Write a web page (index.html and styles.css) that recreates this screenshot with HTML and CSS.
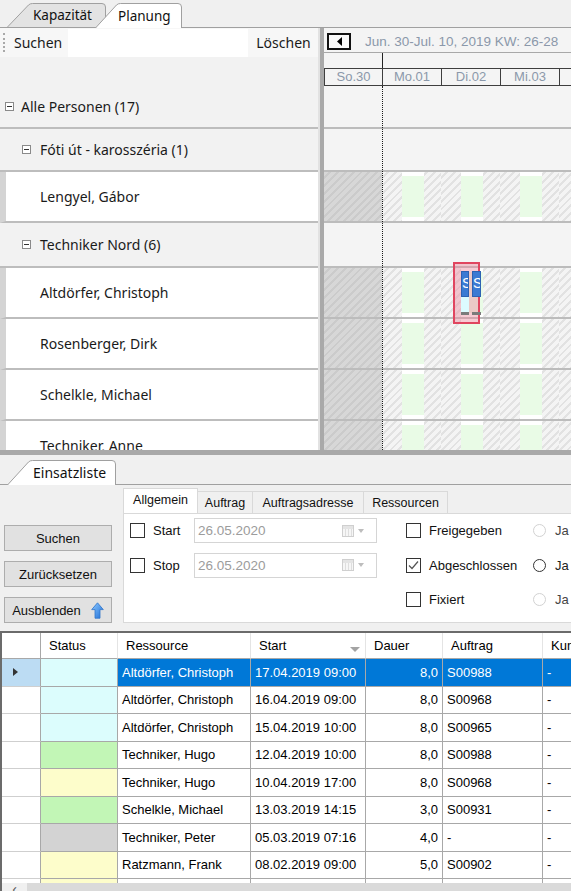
FILE: index.html
```html
<!DOCTYPE html>
<html lang="de">
<head>
<meta charset="utf-8">
<title>Planung</title>
<link rel="stylesheet" href="styles.css">
</head>
<body>
<div class="app">
  <div class="doc-tabs">
    <div class="doc-tab tab-kap">
      <svg class="tab-shape" width="99" height="24" viewBox="0 0 99 24"><path d="M0.5 24 L21.5 2 Q23 0.5 25.5 0.5 L95 0.5 Q98.5 0.5 98.5 4 L98.5 24" fill="#e3e3e3" stroke="#a0a0a0"/></svg>
      <span class="tab-label">Kapazität</span>
    </div>
    <div class="doc-tab tab-plan">
      <svg class="tab-shape" width="87" height="25" viewBox="0 0 87 25"><path d="M0.5 25 L21.5 2 Q23 0.5 25.5 0.5 L83 0.5 Q86.5 0.5 86.5 4 L86.5 25" fill="#ffffff" stroke="#a0a0a0"/></svg>
      <span class="tab-label">Planung</span>
    </div>
  </div>

  <div class="planner">
    <div class="tree-pane">
      <div class="search-bar">
        <span class="grip"></span>
        <span class="search-label">Suchen</span>
        <span class="search-input"></span>
        <span class="search-clear">Löschen</span>
      </div>
      <div class="tree-head"></div>
      <div class="tree-row group lvl0 h43"><span class="minus"></span>Alle Personen (17)</div>
      <div class="tree-row group lvl1 h43"><span class="minus"></span>Fóti út - karosszéria (1)</div>
      <div class="tree-row person">Lengyel, Gábor</div>
      <div class="tree-row group lvl1 h45"><span class="minus"></span>Techniker Nord (6)</div>
      <div class="tree-row person">Altdörfer, Christoph</div>
      <div class="tree-row person">Rosenberger, Dirk</div>
      <div class="tree-row person">Schelkle, Michael</div>
      <div class="tree-row person">Techniker, Anne</div>
    </div>
    <div class="v-split"></div>
    <div class="gantt-pane">
      <div class="gantt-title">
        <span class="nav-back"><svg width="5" height="9" viewBox="0 0 5 9"><path d="M5 0 L0 4.5 L5 9 Z" fill="#000"/></svg></span>
        <span class="range">Jun. 30-Jul. 10, 2019 KW: 26-28</span>
      </div>
      <div class="gantt-blank"><span class="blank-past"></span></div>
      <div class="day-row">
        <span class="day-cell first">So.30</span>
        <span class="day-cell">Mo.01</span>
        <span class="day-cell">Di.02</span>
        <span class="day-cell">Mi.03</span>
        <span class="day-cell">Do.04</span>
      </div>
      <div class="g-row group h43"></div>
      <div class="g-row group h43"></div>
      <div class="g-row person">
        <span class="g-off"></span>
        <span class="g-day"><span class="work"><span class="work-in"></span></span></span>
        <span class="g-day"><span class="work"><span class="work-in"></span></span></span>
        <span class="g-day"><span class="work"><span class="work-in"></span></span></span>
        <span class="g-day"><span class="work"><span class="work-in"></span></span></span>
      </div>
      <div class="g-row group h45"></div>
      <div class="g-row person">
        <span class="g-off"></span>
        <span class="g-day"><span class="work"><span class="work-in"></span></span></span>
        <span class="g-day"><span class="work"><span class="work-in"></span></span></span>
        <span class="g-day"><span class="work"><span class="work-in"></span></span></span>
        <span class="g-day"><span class="work"><span class="work-in"></span></span></span>
      </div>
      <div class="g-row person">
        <span class="g-off"></span>
        <span class="g-day"><span class="work"><span class="work-in"></span></span></span>
        <span class="g-day"><span class="work"><span class="work-in"></span></span></span>
        <span class="g-day"><span class="work"><span class="work-in"></span></span></span>
        <span class="g-day"><span class="work"><span class="work-in"></span></span></span>
      </div>
      <div class="g-row person">
        <span class="g-off"></span>
        <span class="g-day"><span class="work"><span class="work-in"></span></span></span>
        <span class="g-day"><span class="work"><span class="work-in"></span></span></span>
        <span class="g-day"><span class="work"><span class="work-in"></span></span></span>
        <span class="g-day"><span class="work"><span class="work-in"></span></span></span>
      </div>
      <div class="g-row person">
        <span class="g-off"></span>
        <span class="g-day"><span class="work"><span class="work-in"></span></span></span>
        <span class="g-day"><span class="work"><span class="work-in"></span></span></span>
        <span class="g-day"><span class="work"><span class="work-in"></span></span></span>
        <span class="g-day"><span class="work"><span class="work-in"></span></span></span>
      </div>
      <div class="today-line"></div>
      <div class="appt">
        <div class="appt-col">
          <span class="appt-bar">S</span>
          <span class="appt-state"></span>
          <span class="appt-foot"></span>
        </div>
        <div class="appt-col wide">
          <span class="appt-bar">S</span>
          <span class="appt-gap"></span>
          <span class="appt-foot"></span>
        </div>
      </div>
    </div>
  </div>

  <div class="h-split"></div>

  <div class="list-tabs">
    <div class="doc-tab tab-einsatz">
      <svg class="tab-shape" width="109" height="25" viewBox="0 0 109 25"><path d="M0.5 25 L21.5 2 Q23 0.5 25.5 0.5 L105 0.5 Q108.5 0.5 108.5 4 L108.5 25" fill="#ffffff" stroke="#a0a0a0"/></svg>
      <span class="tab-label">Einsatzliste</span>
    </div>
  </div>

  <div class="filter-panel">
    <div class="btn-col">
      <span class="btn">Suchen</span>
      <span class="btn">Zurücksetzen</span>
      <span class="btn">Ausblenden
        <svg class="up-icon" width="13" height="17" viewBox="0 0 13 17">
          <defs><linearGradient id="ug" x1="0" y1="0" x2="1" y2="1"><stop offset="0" stop-color="#8cc8ff"/><stop offset="1" stop-color="#1f6fd6"/></linearGradient></defs>
          <path d="M6.5 0.8 L12.3 7.6 L9 7.6 L9 16.2 L4 16.2 L4 7.6 L0.7 7.6 Z" fill="url(#ug)" stroke="#2f74c9" stroke-width="0.8"/>
        </svg>
      </span>
    </div>
    <div class="filter-tabs">
      <div class="ftab-strip">
        <span class="ftab active w-allg">Allgemein</span>
        <span class="ftab w-auf">Auftrag</span>
        <span class="ftab w-adr">Auftragsadresse</span>
        <span class="ftab w-res">Ressourcen</span>
      </div>
      <div class="ftab-body">
        <span class="cb"></span><span class="flabel">Start</span>
        <span class="date-in"><span class="date-text">26.05.2020</span><span class="cal"></span><span class="dd"></span></span>
        <span class="sp"></span>
        <span class="cb"></span><span class="flabel">Freigegeben</span><span class="radio dim"></span><span class="ja dim-t">Ja</span>

        <span class="cb"></span><span class="flabel">Stop</span>
        <span class="date-in"><span class="date-text">26.05.2020</span><span class="cal"></span><span class="dd"></span></span>
        <span class="sp"></span>
        <span class="cb checked"><svg width="13" height="13" viewBox="0 0 13 13"><path d="M2 6.5 L5 9.5 L11 2.5" fill="none" stroke="#555" stroke-width="1.2"/></svg></span><span class="flabel">Abgeschlossen</span><span class="radio"></span><span class="ja">Ja</span>

        <span></span><span></span><span></span>
        <span class="sp"></span>
        <span class="cb"></span><span class="flabel">Fixiert</span><span class="radio dim"></span><span class="ja dim-t">Ja</span>
      </div>
    </div>
  </div>

  <div class="grid-wrap">
    <div class="grid-view">
      <table class="list">
        <thead>
          <tr>
            <th class="c-rh"></th>
            <th class="c-st">Status</th>
            <th class="c-res">Ressource</th>
            <th class="c-start">Start<span class="sort"></span></th>
            <th class="c-dur">Dauer</th>
            <th class="c-auf">Auftrag</th>
            <th class="c-ku">Kunde</th>
          </tr>
        </thead>
        <tbody>
          <tr class="sel">
            <td class="rh"><span class="cur"></span></td>
            <td class="st s-cyan"></td>
            <td>Altdörfer, Christoph</td><td>17.04.2019 09:00</td><td class="num">8,0</td><td>S00988</td><td>-</td>
          </tr>
          <tr>
            <td class="rh"></td><td class="st s-cyan"></td>
            <td>Altdörfer, Christoph</td><td>16.04.2019 09:00</td><td class="num">8,0</td><td>S00968</td><td>-</td>
          </tr>
          <tr>
            <td class="rh"></td><td class="st s-cyan"></td>
            <td>Altdörfer, Christoph</td><td>15.04.2019 10:00</td><td class="num">8,0</td><td>S00965</td><td>-</td>
          </tr>
          <tr>
            <td class="rh"></td><td class="st s-green"></td>
            <td>Techniker, Hugo</td><td>12.04.2019 10:00</td><td class="num">8,0</td><td>S00988</td><td>-</td>
          </tr>
          <tr>
            <td class="rh"></td><td class="st s-yellow"></td>
            <td>Techniker, Hugo</td><td>10.04.2019 17:00</td><td class="num">8,0</td><td>S00968</td><td>-</td>
          </tr>
          <tr>
            <td class="rh"></td><td class="st s-green"></td>
            <td>Schelkle, Michael</td><td>13.03.2019 14:15</td><td class="num">3,0</td><td>S00931</td><td>-</td>
          </tr>
          <tr>
            <td class="rh"></td><td class="st s-gray"></td>
            <td>Techniker, Peter</td><td>05.03.2019 07:16</td><td class="num">4,0</td><td>-</td><td>-</td>
          </tr>
          <tr>
            <td class="rh"></td><td class="st s-yellow"></td>
            <td>Ratzmann, Frank</td><td>08.02.2019 09:00</td><td class="num">5,0</td><td>S00902</td><td>-</td>
          </tr>
          <tr>
            <td class="rh"></td><td class="st s-yellow"></td>
            <td>Techniker, Hugo</td><td>06.02.2019 09:00</td><td class="num">8,0</td><td>S00899</td><td>-</td>
          </tr>
        </tbody>
      </table>
    </div>
    <div class="hscroll">
      <span class="hs-arrow">&#8249;</span>
      <span class="hs-thumb"></span>
    </div>
  </div>
</div>
</body>
</html>
```
FILE: styles.css
```css
* { box-sizing: border-box; }
html, body { margin: 0; padding: 0; }
body {
  width: 571px;
  height: 891px;
  overflow: hidden;
  background: #f0f0f0;
  font-family: "Liberation Sans", Arial, sans-serif;
  font-size: 13px;
  color: #000;
}
.app {
  width: 571px;
  height: 891px;
  display: flex;
  flex-direction: column;
  overflow: hidden;
}

/* ---------- document tabs ---------- */
.doc-tabs {
  flex: 0 0 28px;
  display: flex;
  align-items: flex-end;
  padding-left: 7px;
  border-bottom: 1px solid #a0a0a0;
}
.doc-tab {
  position: relative;
  display: flex;
  align-items: center;
  font-family: "Noto Sans", sans-serif;
  font-size: 13.5px;
  color: #111;
}
.tab-shape { position: absolute; left: 0; top: 0; }
.tab-label { position: relative; }
.tab-kap { width: 99px; height: 24px; padding-left: 26px; z-index: 1; }
.tab-plan { width: 87px; height: 25px; margin-left: -11px; margin-bottom: -1px; padding-left: 23px; z-index: 2; }

/* ---------- planner ---------- */
.planner {
  flex: 0 0 422px;
  display: flex;
  overflow: hidden;
}
.tree-pane {
  flex: 0 0 320px;
  display: flex;
  flex-direction: column;
  background: #f2f2f2;
  border-right: 2px solid #e2e2e2;
  overflow: hidden;
  font-family: "Noto Sans", sans-serif;
  font-size: 14px;
  color: #1a1a1a;
}
.search-bar {
  flex: 0 0 29px;
  display: flex;
  align-items: center;
  background: #f7f7f7;
}
.grip {
  width: 3px;
  height: 19px;
  margin-left: 3px;
  border-left: 2px dotted #a9a9a9;
}
.search-label { margin-left: 8px; }
.search-input {
  width: 180px;
  height: 28px;
  margin-left: 6px;
  align-self: flex-end;
  background: #fff;
}
.search-clear { margin-left: 8px; }
.tree-head { flex: 0 0 29px; }
.tree-row {
  flex: 0 0 auto;
  display: flex;
  align-items: center;
  white-space: nowrap;
  border-bottom: 2px solid #bdbdbd;
}
.h43 { height: 43px; }
.h45 { height: 45px; }
.tree-row.person {
  height: 51px;
  background: #fff;
  border-left: 6px solid #d4d4d4;
  padding-left: 34px;
}
.lvl0 { padding-left: 5px; }
.lvl1 { padding-left: 22px; }
.minus {
  position: relative;
  flex: 0 0 auto;
  width: 9px;
  height: 9px;
  border: 1px solid #8a8a8a;
  background: #fff;
  margin-right: 7px;
}
.lvl1 .minus { margin-right: 9px; }
.minus::after {
  content: "";
  position: absolute;
  left: 1px;
  right: 1px;
  top: 3px;
  height: 1px;
  background: #333;
}

.v-split { flex: 0 0 4px; background: #a9a9a9; }

.gantt-pane {
  flex: 1 1 auto;
  position: relative;
  display: flex;
  flex-direction: column;
  background: #f4f4f4;
  overflow: hidden;
}
.gantt-title {
  flex: 0 0 25px;
  display: flex;
  align-items: flex-start;
  border-bottom: 1px solid #a8a8a8;
  padding-left: 3px;
}
.nav-back {
  width: 24px;
  height: 17px;
  margin-top: 5px;
  border: 2px solid #111;
  background: #fafafa;
  display: flex;
  align-items: center;
  justify-content: center;
}
.range {
  margin-left: 14px;
  margin-top: 6px;
  font-size: 13.5px;
  color: #8b98aa;
  white-space: nowrap;
}
.gantt-blank { flex: 0 0 15px; display: flex; }
.blank-past { width: 59px; border-right: 1px solid #222; }
.day-row {
  flex: 0 0 18px;
  display: flex;
  border-top: 1px solid #3e3e3e;
  border-bottom: 1px solid #3e3e3e;
}
.day-cell {
  flex: 0 0 59px;
  border-right: 1px solid #3e3e3e;
  text-align: center;
  font-size: 13px;
  line-height: 16px;
  color: #8b98aa;
}
.day-cell.first { border-left: 1px solid #3e3e3e; }

.g-row {
  flex: 0 0 auto;
  display: flex;
  border-bottom: 2px solid #bcbcbc;
}
.g-row.person { height: 51px; }
.g-off {
  flex: 0 0 58px;
  background: repeating-linear-gradient(135deg, #d7d7d7 0 3.5px, #cbcbcb 3.5px 5.5px);
}
.g-day {
  flex: 0 0 59px;
  padding-left: 20px;
  background: repeating-linear-gradient(135deg, #f4f4f4 0 3.5px, #e2e2e2 3.5px 5.5px);
}
.work {
  display: block;
  width: 22px;
  height: 100%;
  padding: 4px 0;
  background: #fff;
}
.work-in {
  display: block;
  height: 100%;
  background: #e9fbe6;
}
.today-line {
  position: absolute;
  left: 58px;
  top: 58px;
  bottom: 0;
  border-left: 1px dotted #1a1a1a;
}
.appt {
  position: absolute;
  left: 129px;
  top: 234px;
  width: 27px;
  height: 62px;
  border: 2px solid #e0455f;
  background: rgba(238, 140, 160, 0.45);
  display: flex;
  gap: 3px;
  padding: 7px 0 0 6px;
}
.appt-col { display: flex; flex-direction: column; width: 8px; }
.appt-col.wide { width: 9px; }
.appt-bar {
  height: 26px;
  background: #3b7ad3;
  border: 1px solid #2d62b3;
  color: #fff;
  font-size: 14px;
  line-height: 22px;
  overflow: hidden;
  padding-left: 0;
}
.appt-state { height: 15px; background: #dcfbff; }
.appt-gap { height: 15px; }
.appt-foot { height: 3px; background: #7b7b7b; }

/* ---------- lower section ---------- */
.h-split { flex: 0 0 5px; background: #a9a9a9; }
.list-tabs {
  flex: 0 0 30px;
  display: flex;
  align-items: flex-end;
  padding-left: 7px;
  border-bottom: 1px solid #a0a0a0;
}
.tab-einsatz {
  width: 109px;
  height: 25px;
  margin-bottom: -1px;
  padding-left: 26px;
  font-size: 14px;
}

.filter-panel {
  flex: 0 0 146px;
  display: flex;
}
.btn-col {
  flex: 0 0 123px;
  display: flex;
  flex-direction: column;
  gap: 10px;
  padding: 40px 0 0 4px;
}
.btn {
  width: 108px;
  height: 26px;
  display: flex;
  align-items: center;
  justify-content: center;
  gap: 10px;
  background: #e1e1e1;
  border: 1px solid #adadad;
  font-size: 13px;
  color: #111;
}
.up-icon { flex: 0 0 auto; }

.filter-tabs {
  flex: 1 1 auto;
  margin-top: 3px;
  display: flex;
  flex-direction: column;
}
.ftab-strip {
  flex: 0 0 25px;
  display: flex;
  align-items: flex-end;
}
.ftab {
  height: 22px;
  display: flex;
  align-items: center;
  justify-content: center;
  background: #f0f0f0;
  border: 1px solid #d9d9d9;
  border-bottom: none;
  margin-right: -1px;
  font-size: 12.5px;
  color: #111;
}
.ftab.active { height: 25px; background: #fff; align-items: flex-start; padding-top: 4px; }
.w-allg { width: 75px; }
.w-auf { width: 56px; }
.w-adr { width: 112px; }
.w-res { width: 85px; }
.ftab-body {
  height: 110px;
  background: #fff;
  border: 1px solid #d9d9d9;
  border-right: none;
  padding: 4px 0 0 6px;
  display: grid;
  grid-template-columns: 15px 49px 183px 29px 15px 112px 13px 30px;
  grid-template-rows: 25px 25px 25px;
  row-gap: 9.5px;
  align-items: center;
}
.cb {
  width: 15px;
  height: 15px;
  border: 1px solid #333;
  background: #fff;
  display: flex;
  align-items: center;
  justify-content: center;
}
.flabel { padding-left: 8px; font-size: 13px; color: #111; white-space: nowrap; }
.date-in {
  height: 25px;
  display: flex;
  align-items: center;
  border: 1px solid #d5d5d5;
  background: #fff;
  padding-left: 3px;
}
.date-text { color: #9c9c9c; font-size: 13.5px; }
.cal {
  margin-left: auto;
  width: 12px;
  height: 12px;
  border: 1px solid #cfcfcf;
  background:
    linear-gradient(#e4e4e4, #e4e4e4) 0 0 / 100% 3px no-repeat,
    repeating-linear-gradient(90deg, #f6f6f6 0 2px, #dedede 2px 3px);
}
.dd {
  width: 0;
  height: 0;
  margin: 0 12px 0 4px;
  border-left: 3.5px solid transparent;
  border-right: 3.5px solid transparent;
  border-top: 4px solid #bdbdbd;
}
.radio {
  width: 13px;
  height: 13px;
  border: 1px solid #333;
  border-radius: 50%;
  background: #fff;
}
.radio.dim { border-color: #d2d2d2; }
.ja { padding-left: 9px; color: #222; }
.ja.dim-t { color: #444; }

/* ---------- grid ---------- */
.grid-wrap {
  flex: 1 1 auto;
  display: flex;
  flex-direction: column;
  background: #fff;
  border-top: 2px solid #6b6b6b;
  border-left: 2px solid #6b6b6b;
  overflow: hidden;
}
.grid-view { flex: 0 0 250px; overflow: hidden; }
table.list {
  border-collapse: separate;
  border-spacing: 0;
  table-layout: fixed;
  width: 641px;
}
.list th {
  height: 26px;
  padding: 0 0 0 8px;
  text-align: left;
  font-weight: normal;
  background: #fff;
  border-right: 1px solid #e4e4e4;
  border-bottom: 1px solid #a8a8a8;
  white-space: nowrap;
  overflow: hidden;
}
.list th.c-rh { border-right: 1px solid #a8a8a8; }
.c-rh { width: 39px; }
.c-st { width: 77px; }
.c-res { width: 133px; }
.c-start { width: 115px; }
.c-dur { width: 77px; }
.c-auf { width: 100px; }
.c-ku { width: 100px; }
.sort {
  float: right;
  margin: 9px 5px 0 0;
  width: 0;
  height: 0;
  border-left: 5px solid transparent;
  border-right: 5px solid transparent;
  border-top: 5px solid #a3a3a3;
}
.list td {
  height: 27.5px;
  padding: 0 4px;
  border-right: 1px solid #a8a8a8;
  border-bottom: 1px solid #a8a8a8;
  white-space: nowrap;
  overflow: hidden;
}
.list td.rh { border-bottom-color: #cfcfcf; }
.list td.num { text-align: right; }
.s-cyan { background: #dcfdfd; }
.s-green { background: #c2f6b6; }
.s-yellow { background: #fdfdcb; }
.s-gray { background: #d3d3d3; }
.list tr.sel td { background: #0078d7; color: #fff; }
.list tr.sel td.rh { background: #bcdcf3; }
.list tr.sel td.st { background: #dcfdfd; }
.cur {
  display: block;
  margin-left: 7px;
  width: 0;
  height: 0;
  border-top: 4.5px solid transparent;
  border-bottom: 4.5px solid transparent;
  border-left: 5px solid #333;
}
.hscroll {
  flex: 0 0 17px;
  display: flex;
  background: #e6e6e6;
}
.hs-arrow {
  flex: 0 0 25px;
  background: #f0f0f0;
  text-align: center;
  font-size: 14px;
  line-height: 12px;
  color: #555;
}
.hs-thumb { flex: 1 1 auto; background: #dadada; }
```
